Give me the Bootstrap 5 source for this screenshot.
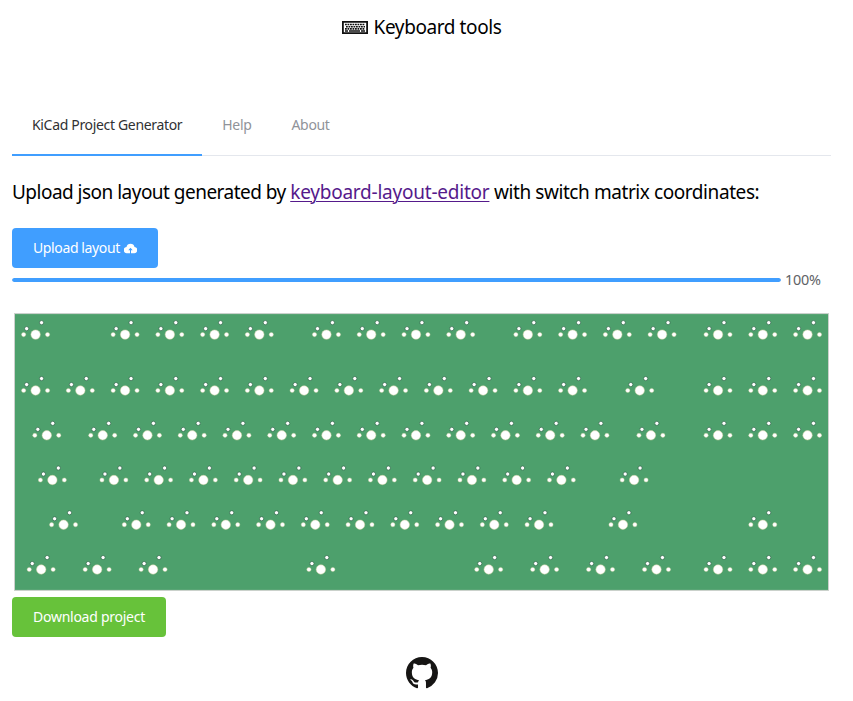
<!DOCTYPE html>
<html lang="en">
<head>
<meta charset="utf-8">
<meta name="viewport" content="width=device-width, initial-scale=1">
<title>Keyboard tools</title>
<link href="https://cdn.jsdelivr.net/npm/bootstrap@5.3.0/dist/css/bootstrap.min.css" rel="stylesheet">
<style>
body{font-family:"Noto Sans",sans-serif;color:#000;width:843px;font-size:20px;letter-spacing:-.52px;line-height:27px;overflow:hidden}
.page-title{height:54px;font-size:19px;letter-spacing:-.41px}
.page-title svg{margin-right:6px}
.main-area{padding:42px 12px 0}
.tool-tabs{height:60px;border-bottom:1px solid #e4e7ed;font-size:14px;letter-spacing:-.33px}
.tool-tabs .nav-link{height:60px;padding:0 20px;line-height:57px;color:#909399;border-bottom:2px solid transparent}
.tool-tabs .nav-link.active{color:#303133;border-color:#409eff}
.intro{margin-top:23px;font-size:19px}
.intro a{color:#551a8b;letter-spacing:-.23px;text-underline-offset:2px;text-decoration-thickness:1px}
.intro .tail{letter-spacing:-.42px}
.tool-btn{height:40px;border:0;border-radius:4px;color:#fff;font-size:14px;letter-spacing:-.26px;line-height:20px;padding:0 21px}
.upload{background:#409eff;width:146px;margin-top:22px;letter-spacing:-.38px}
.upload svg{margin-left:4px;flex:none}
.download{background:#67c23a;width:154px}
.load-row{height:24px;width:819px}
.load-row .progress{height:4px;width:769px;border-radius:4px;--bs-progress-bar-bg:#409eff}
.load-row .progress-bar{border-radius:4px}
.load-row span{font-size:14.4px;color:#606266;margin-left:4px;padding-bottom:1px;letter-spacing:-.2px}
.board{width:819px;height:279px;margin-top:21px;margin-bottom:5px}
</style>
<script src="https://cdn.jsdelivr.net/npm/bootstrap@5.3.0/dist/js/bootstrap.bundle.min.js"></script>
</head>
<body>
<header class="page-title d-flex align-items-center justify-content-center">
<svg width="26" height="13" viewBox="0 0 26 13" aria-hidden="true"><path fill="none" stroke="#111" stroke-width="1.8" d="M.9.9h24.2v11.2H.9z"/><path stroke="#111" stroke-width="1.6" stroke-dasharray="1.8 .7" d="M3 3.5h20M4 5.7h19M3 7.9h20"/><path stroke="#111" stroke-width="1.5" d="M3 10h3M7 10h11M19 10h4"/></svg>
<span>Keyboard tools</span>
</header>
<main class="main-area">
<nav class="nav tool-tabs">
<a class="nav-link active" href="#">KiCad Project Generator</a><a class="nav-link" href="#">Help</a><a class="nav-link" href="#">About</a>
</nav>
<p class="intro mb-0 text-nowrap">Upload json layout generated by <a href="#">keyboard-layout-editor</a><span class="tail"> with switch matrix coordinates:</span></p>
<button class="btn tool-btn upload d-flex align-items-center text-nowrap" type="button">Upload layout
<svg width="13" height="11" viewBox="0 0 13 11" aria-hidden="true"><path fill="#fff" d="M3.2 10.2A3.1 3.1 0 0 1 2.5 4a4.1 4.1 0 0 1 8 0 3.1 3.1 0 0 1-.7 6.2H7V7.2h1.7L6.5 4.7 4.3 7.2H6v3z"/></svg></button>
<div class="load-row d-flex align-items-center"><div class="progress"><div class="progress-bar w-100"></div></div><span>100%</span></div>
<svg class="board d-block" viewBox="12 313 819 279" role="img" aria-label="Circuit board preview">
<defs><g id="key"><circle r="4.7" fill="#fff" stroke="#d5d5a5" stroke-width=".5"/><circle cx="-11.95" r="2.1" fill="#fff" stroke="#d5d5a5" stroke-width=".4"/><circle cx="11.95" r="2.1" fill="#fff" stroke="#d5d5a5" stroke-width=".4"/><circle cx="-8.95" cy="-5.95" r="2.1" fill="#fff" stroke="#30664a" stroke-width=".7"/><circle cx="5.95" cy="-11.95" r="2.1" fill="#fff" stroke="#30664a" stroke-width=".7"/></g></defs>
<rect x="14.5" y="313.6" width="814" height="276.8" fill="#4da06c" stroke="#ccd0cd"/>
<g id="keys"></g>
</svg>
<button class="btn tool-btn download text-nowrap" type="button">Download project</button>
</main>
<footer class="d-flex justify-content-center pt-3">
<svg width="32" height="32" viewBox="0 0 16 16" class="mt-1" aria-label="GitHub"><path fill="#161514" d="M8 0C3.58 0 0 3.58 0 8c0 3.54 2.29 6.53 5.47 7.59.4.07.55-.17.55-.38 0-.19-.01-.82-.01-1.49-2.01.37-2.53-.49-2.69-.94-.09-.23-.48-.94-.82-1.13-.28-.15-.68-.52-.01-.53.63-.01 1.08.58 1.23.82.72 1.21 1.87.87 2.33.66.07-.52.28-.87.51-1.07-1.78-.2-3.64-.89-3.64-3.95 0-.87.31-1.59.82-2.15-.08-.2-.36-1.02.08-2.12 0 0 .67-.21 2.2.82A7.7 7.7 0 0 1 8 3.87c.68 0 1.36.09 2 .26 1.53-1.04 2.2-.82 2.2-.82.44 1.1.16 1.92.08 2.12.51.56.82 1.27.82 2.15 0 3.07-1.87 3.75-3.65 3.95.29.25.54.73.54 1.48v2.2c0 .21.15.46.55.38A8.01 8.01 0 0 0 16 8c0-4.42-3.58-8-8-8z"/></svg>
</footer>
<script>
// Key centres in keyboard units
const run = (a, n) => Array.from({length:n}, (_, i) => a + i);
const rows = [
 [334.6, [0, ...run(2,4), ...run(6.5,4), ...run(11,4), ...run(15.25,3)]],
 [390.5, [...run(0,13), 13.5, ...run(15.25,3)]],
 [435.3, [.25, ...run(1.5,12), 13.75, ...run(15.25,3)]],
 [480, [.375, ...run(1.75,11), 13.375]],
 [524.7, [.625, ...run(2.25,10), 13.125, 16.25]],
 [569.5, [.125, 1.375, 2.625, 6.375, 10.125, 11.375, 12.625, 13.875, ...run(15.25,3)]]
];
document.getElementById('keys').innerHTML = rows.map(([y, xs]) => xs.map(x => `<use href="#key" x="${35.6 + x * 44.75}" y="${y}"/>`).join('')).join('');
</script>
</body>
</html>
